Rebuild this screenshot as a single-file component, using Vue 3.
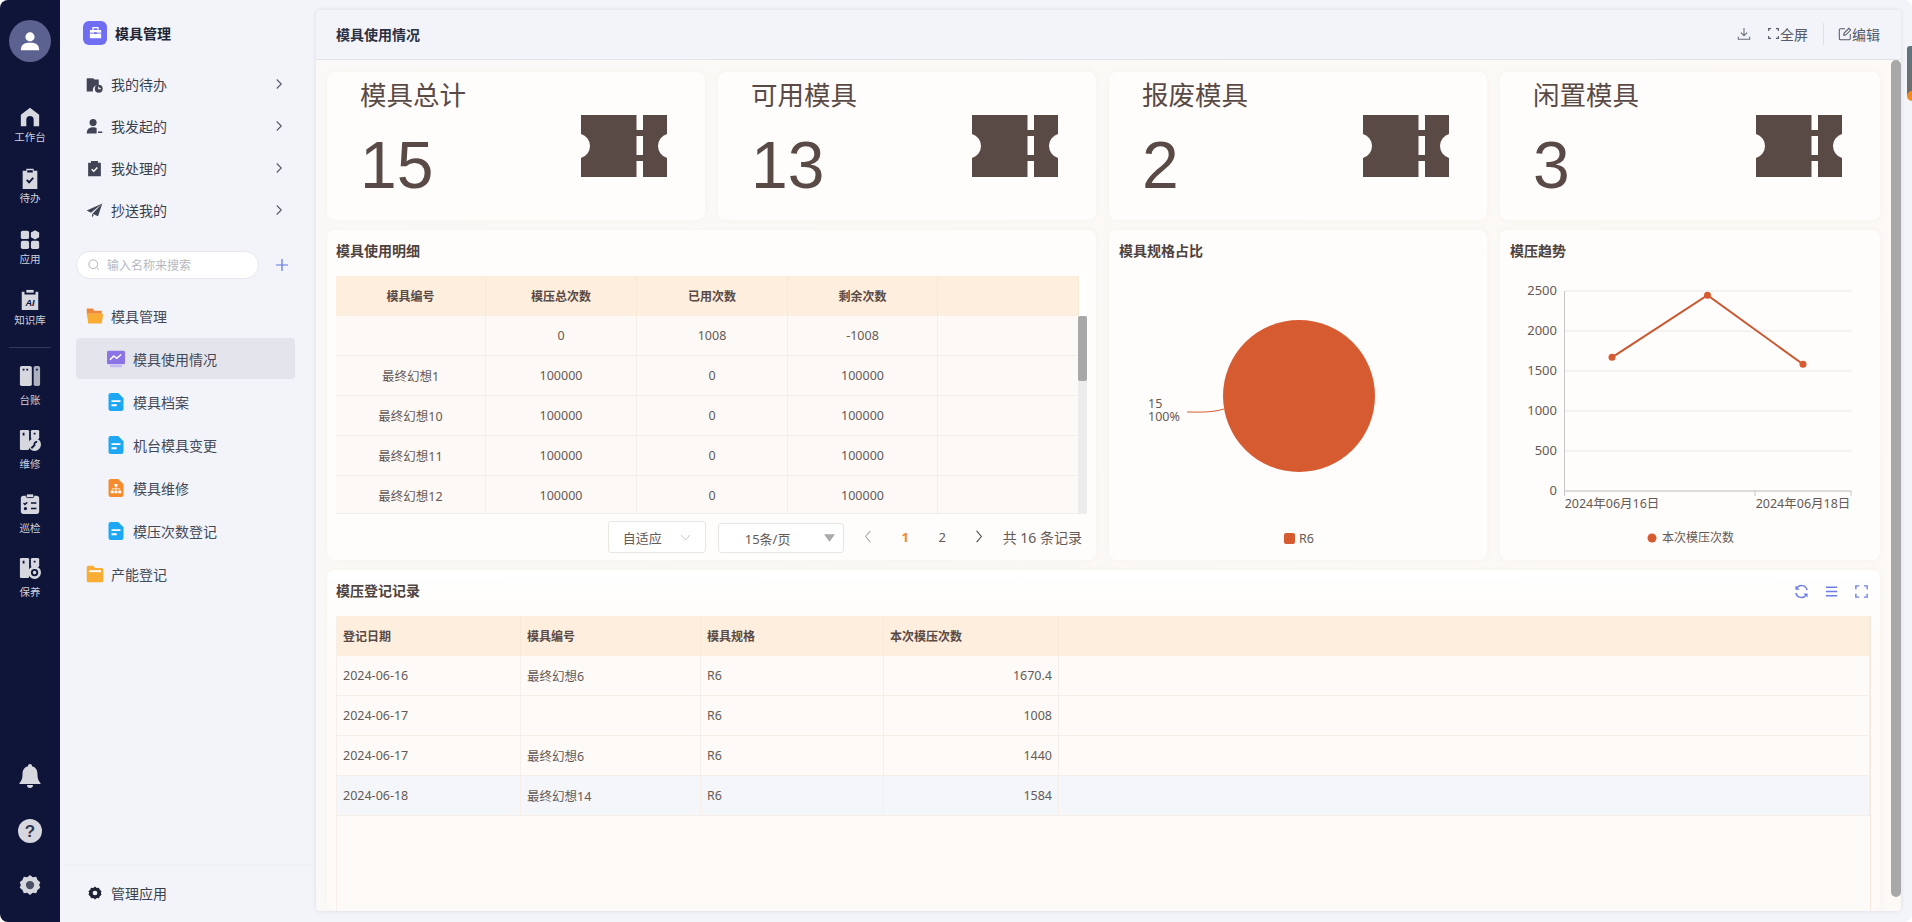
<template>
  <div class="app">
    <!-- dark icon rail -->
    <aside class="rail">
      <div class="avatar">
        <svg viewBox="0 0 24 24" width="22" height="22"><circle cx="12" cy="7.500" r="5" fill="#fff" /><path d="M2 22c0-6 4-8 10-8s10 2 10 8z" fill="#fff" /></svg>
      </div>
      <div class="rail-group first">
        <div class="rail-item">
          <svg viewBox="0 0 24 24" width="22" height="22"><path d="M12 2l10 7.500V22h-6v-7a4 4 0 0 0-8 0v7H2V9.500z" fill="#d6d7df" /></svg>
          <span>工作台</span>
        </div>
        <div class="rail-item">
          <svg viewBox="0 0 24 24" width="22" height="22"><path d="M4 4h4V2h8v2h4v20H4z" fill="#d6d7df" /><path d="M9 3.500h6v2.500H9z" fill="#0e1538" /><path d="M8.500 14l2.500 2.800 4.500-5" fill="none" stroke="#0e1538" stroke-width="2" /></svg>
          <span>待办</span>
        </div>
        <div class="rail-item">
          <svg viewBox="0 0 24 24" width="22" height="22"><rect x="2" y="3" width="9" height="9" rx="2" fill="#d6d7df" /><path d="M17.500 2.500l4.500 2.500v5l-4.500 2.500-4.500-2.500V5z" fill="#d6d7df" /><rect x="2" y="14" width="9" height="9" rx="2" fill="#d6d7df" /><rect x="13" y="14" width="9" height="9" rx="2" fill="#d6d7df" /></svg>
          <span>应用</span>
        </div>
        <div class="rail-item">
          <svg viewBox="0 0 24 24" width="22" height="22"><path d="M3 3h3v3h12V3h3v20H3z" fill="#d6d7df" /><path d="M8 1h8v3H8z" fill="#d6d7df" /><text x="12" y="18" class="ai">AI</text></svg>
          <span>知识库</span>
        </div>
      </div>
      <div class="rail-line"></div>
      <div class="rail-group">
        <div class="rail-item tall">
          <svg viewBox="0 0 24 24" width="22" height="22"><rect x="1" y="1" width="13" height="22" rx="2" fill="#d6d7df" /><rect x="16" y="1" width="7" height="22" rx="2" fill="#aeb0bd" /><path d="M4 4h2v2H4zM8 4h2v2H8zM18.500 4h2v2h-2z" fill="#0e1538" /></svg>
          <span>台账</span>
        </div>
        <div class="rail-item tall">
          <svg viewBox="0 0 24 24" width="22" height="22"><rect x="1" y="1" width="10" height="22" rx="1.500" fill="#d6d7df" /><rect x="13" y="1" width="9" height="10" rx="1.500" fill="#d6d7df" /><circle cx="17" cy="17" r="7" fill="#d6d7df" /><path d="M13.500 21l4-4M19.800 14.200a2.500 2.500 0 0 0-3 3" stroke="#0e1538" stroke-width="2" fill="none" /><path d="M4 4h2v3H4zM16 4h2v2h-2z" fill="#0e1538" /></svg>
          <span>维修</span>
        </div>
        <div class="rail-item tall">
          <svg viewBox="0 0 24 24" width="22" height="22"><rect x="2" y="3" width="20" height="20" rx="3" fill="#d6d7df" /><rect x="8" y="1" width="8" height="4" rx="1" fill="#d6d7df" stroke="#0e1538" /><path d="M5 11l1.500 1.500L9 10M13 11h6M13 17h6" stroke="#0e1538" stroke-width="1.600" fill="none" /><circle cx="7" cy="17" r="1.800" fill="#0e1538" /></svg>
          <span>巡检</span>
        </div>
        <div class="rail-item tall">
          <svg viewBox="0 0 24 24" width="22" height="22"><rect x="1" y="1" width="10" height="22" rx="1.500" fill="#d6d7df" /><rect x="13" y="1" width="9" height="10" rx="1.500" fill="#d6d7df" /><circle cx="17" cy="17" r="7" fill="#d6d7df" /><circle cx="17" cy="17" r="3" fill="none" stroke="#0e1538" stroke-width="2" /><path d="M4 4h2v3H4zM16 4h2v2h-2z" fill="#0e1538" /></svg>
          <span>保养</span>
        </div>
      </div>
      <div class="rail-bottom">
        <svg viewBox="0 0 24 24" width="24" height="24"><path d="M12 0a2 2 0 0 1 2 2.200c4 1 5.500 4 5.500 8.300 0 4 .8 6 3 8.500v1H1.500v-1c2.200-2.500 3-4.500 3-8.500 0-4.300 1.500-7.300 5.500-8.300A2 2 0 0 1 12 0z" fill="#d6d7df" /><path d="M9 21h6a3 3 0 0 1-6 0z" fill="#d6d7df" /></svg>
        <svg viewBox="0 0 24 24" width="24" height="24"><circle cx="12" cy="12" r="12" fill="#d6d7df" /><text x="12" y="18" class="help">?</text></svg>
        <svg viewBox="0 0 24 24" width="22" height="22"><path d="M12 1l3 2.500 3.800-.6 1.400 3.600 3 2.400L22 12l1.200 3.100-3 2.400-1.400 3.600-3.800-.6L12 23l-3-2.500-3.800.6-1.400-3.600-3-2.400L2 12 .8 8.900l3-2.400 1.400-3.600 3.800.6z" fill="#d6d7df" /><circle cx="12" cy="12" r="4.500" fill="#4c5064" /></svg>
      </div>
    </aside>

    <!-- app menu -->
    <nav class="side">
      <div class="side-head">
        <div class="logo">
          <svg viewBox="0 0 24 24" width="15" height="15"><path d="M3 8h18v13H3z" fill="#fff" /><path d="M8 8V4h8v4" fill="none" stroke="#fff" stroke-width="2" /><path d="M3 13h18" stroke="#6f6df2" stroke-width="1.500" /><rect x="10" y="11.500" width="4" height="3" fill="#6f6df2" /></svg>
        </div>
        <span>模具管理</span>
      </div>

      <div class="menu">
        <div class="menu-row">
          <svg viewBox="0 0 24 24" width="17" height="17"><path d="M1 3h9l2 2h6v8a7 7 0 0 0-8 9H1z" fill="#404454" /><circle cx="18" cy="18" r="5.500" fill="#404454" /><path d="M18 15v3h3" stroke="#fff" stroke-width="1.500" fill="none" /></svg>
          <span>我的待办</span>
          <svg class="chev" viewBox="0 0 10 16" width="8" height="12"><path d="M2 2l6 6-6 6" fill="none" stroke="#555a68" stroke-width="1.500" /></svg>
        </div>
        <div class="menu-row">
          <svg viewBox="0 0 24 24" width="17" height="17"><circle cx="10" cy="6.500" r="5" fill="#404454" /><path d="M1 22c0-6 3-9 9-9 2 0 4 .5 5 1.500V22z" fill="#404454" /><path d="M17 20h6" stroke="#404454" stroke-width="2" /></svg>
          <span>我发起的</span>
          <svg class="chev" viewBox="0 0 10 16" width="8" height="12"><path d="M2 2l6 6-6 6" fill="none" stroke="#555a68" stroke-width="1.500" /></svg>
        </div>
        <div class="menu-row">
          <svg viewBox="0 0 24 24" width="17" height="17"><path d="M3 4h4V1.500h10V4h4v19H3z" fill="#404454" /><path d="M8 13l3 3 5-5.500" fill="none" stroke="#fff" stroke-width="2" /></svg>
          <span>我处理的</span>
          <svg class="chev" viewBox="0 0 10 16" width="8" height="12"><path d="M2 2l6 6-6 6" fill="none" stroke="#555a68" stroke-width="1.500" /></svg>
        </div>
        <div class="menu-row">
          <svg viewBox="0 0 24 24" width="17" height="17"><path d="M23 2L1 12l6 3L23 2zM23 2L9 16.500l8 3.500zM8.500 17v5l2.500-3.500z" fill="#404454" /></svg>
          <span>抄送我的</span>
          <svg class="chev" viewBox="0 0 10 16" width="8" height="12"><path d="M2 2l6 6-6 6" fill="none" stroke="#555a68" stroke-width="1.500" /></svg>
        </div>
      </div>

      <div class="search-row">
        <div class="search">
          <svg viewBox="0 0 16 16" width="12" height="12"><circle cx="7" cy="7" r="5.800" fill="none" stroke="#a9acb4" stroke-width="1.200" /><path d="M11.500 11.500l3 3" stroke="#a9acb4" stroke-width="1.200" /></svg>
          <span>输入名称来搜索</span>
        </div>
        <svg class="plus" viewBox="0 0 12 12" width="12" height="12"><path d="M6 0v12M0 6h12" stroke="#5f74e0" stroke-width="1.200" /></svg>
      </div>

      <div class="tree">
        <div class="tree-row">
          <svg viewBox="0 0 24 24" width="18" height="18"><path d="M1 2h8l2 3h10v4H1z" fill="#f0883a" /><path d="M1 9h22l-2 13H3z" fill="#f9ad35" /></svg>
          <span>模具管理</span>
        </div>
        <div
          v-for="leaf in leaves"
          :key="leaf.name"
          class="tree-row leaf"
          :class="{ active: leaf.type === 'chart' }"
        >
          <svg v-if="leaf.type === 'chart'" viewBox="0 0 24 24" width="18" height="18"><rect x="0" y="1" width="24" height="18" rx="2" fill="#8a74e6" /><rect x="4" y="20" width="16" height="3" rx="1" fill="#c5b9f2" /><path d="M4 13l5-5 4 3 6-5" fill="none" stroke="#fff" stroke-width="2" /></svg>
          <svg v-else-if="leaf.type === 'tree'" viewBox="0 0 24 24" width="18" height="18"><path d="M2 3a3 3 0 0 1 3-3h10l7 7v14a3 3 0 0 1-3 3H5a3 3 0 0 1-3-3z" fill="#f58b2c" /><path d="M10 6.500h4v3.500h-4zM5 15.500h4V19H5zM10 15.500h4V19h-4zM15 15.500h4V19h-4z" fill="#fff" /><path d="M7 15.500V13h10v2.500M12 10v5.500" fill="none" stroke="#fff" /></svg>
          <svg v-else viewBox="0 0 24 24" width="18" height="18"><path d="M2 3a3 3 0 0 1 3-3h10l7 7v14a3 3 0 0 1-3 3H5a3 3 0 0 1-3-3z" fill="#1ea7f2" /><path d="M6 9.500h12v2.500H6zM6 15h7v2.500H6z" fill="#fff" /></svg>
          <span>{{ leaf.name }}</span>
        </div>
        <div class="tree-row">
          <svg viewBox="0 0 24 24" width="18" height="18"><path d="M1 3a2 2 0 0 1 2-2h7l2 3h9a2 2 0 0 1 2 2v15a2 2 0 0 1-2 2H3a2 2 0 0 1-2-2z" fill="#f9ad35" /><path d="M4 7h16v2.500H4z" fill="#fff" /></svg>
          <span>产能登记</span>
        </div>
      </div>

      <div class="side-foot">
        <svg viewBox="0 0 24 24" width="14" height="14"><path d="M12 1l3 2.500 3.800-.6 1.400 3.600 3 2.400L22 12l1.200 3.100-3 2.400-1.400 3.600-3.800-.6L12 23l-3-2.500-3.800.6-1.400-3.600-3-2.400L2 12 .8 8.900l3-2.400 1.400-3.600 3.800.6z" fill="#1f2333" /><circle cx="12" cy="12" r="4" fill="#f2f4fa" /></svg>
        <span>管理应用</span>
      </div>
    </nav>

    <!-- dashboard panel -->
    <main class="panel">
      <header class="panel-head">
        <h1>模具使用情况</h1>
        <div class="head-tools">
          <svg viewBox="0 0 16 16" width="14" height="14"><path d="M8 1v9M4.500 6.500L8 10l3.500-3.500M1.500 11v3h13v-3" fill="none" stroke="#666b78" stroke-width="1.200" /></svg>
          <div class="tool fs">
            <svg viewBox="0 0 16 16" width="13" height="13"><path d="M5 2H2v3M11 2h3v3M5 14H2v-3M11 14h3v-3" fill="none" stroke="#555a68" stroke-width="1.400" /></svg>
            <span>全屏</span>
          </div>
          <i class="sep"></i>
          <div class="tool">
            <svg viewBox="0 0 16 16" width="14" height="14"><path d="M8 2H3a1.500 1.500 0 0 0-1.500 1.500v9.500A1.500 1.500 0 0 0 3 14.500h9.500A1.500 1.500 0 0 0 14 13V8" fill="none" stroke="#555a68" stroke-width="1.200" /><path d="M6.500 9.500l.5-2.500 5.500-5.500 2 2L9 9z" fill="none" stroke="#555a68" stroke-width="1.200" /></svg>
            <span>编辑</span>
          </div>
        </div>
      </header>

      <div class="panel-body">
        <div class="dash">
          <section v-for="s in stats" :key="s.title" class="card stat">
            <div class="stat-text">
              <p class="stat-title">{{ s.title }}</p>
              <p class="stat-num">{{ s.value }}</p>
            </div>
            <svg viewBox="0 0 86 62" width="86" height="62"><path fill-rule="evenodd" d="M0 0h55.500v15h6.500V0h24v19a12.500 12.500 0 0 0 0 24v19H62V46h-6.500v16H0V43a12.500 12.500 0 0 0 0-24zM55.500 21v19h6.500V21z" fill="#5a4a46" /></svg>
          </section>

          <section class="card detail">
            <h2>模具使用明细</h2>
            <div class="detail-wrap">
              <table class="grid-table center">
                <colgroup>
                  <col style="width: 150px" />
                  <col style="width: 151px" />
                  <col style="width: 151px" />
                  <col style="width: 150px" />
                  <col />
                </colgroup>
                <thead>
                  <tr><th>模具编号</th><th>模压总次数</th><th>已用次数</th><th>剩余次数</th><th></th></tr>
                </thead>
                <tbody>
                  <tr v-for="(row, i) in details" :key="i">
                    <td>{{ row[0] }}</td><td>{{ row[1] }}</td><td>{{ row[2] }}</td><td>{{ row[3] }}</td><td></td>
                  </tr>
                </tbody>
              </table>
              <div class="tbl-track"></div>
              <div class="tbl-thumb"></div>
            </div>
            <div class="pager">
              <div class="sel auto">
                <span>自适应</span>
                <svg viewBox="0 0 12 8" width="11" height="7"><path d="M1 1l5 6 5-6" fill="none" stroke="#c4c4c4" /></svg>
              </div>
              <div class="sel size">
                <span>15条/页</span>
                <svg viewBox="0 0 12 8" width="11" height="8"><path d="M0 0h12L6 8z" fill="#aaa" /></svg>
              </div>
              <div class="pg">
                <svg viewBox="0 0 10 16" width="8" height="13"><path d="M8 1L2 8l6 7" fill="none" stroke="#aaa" stroke-width="1.300" /></svg>
              </div>
              <div class="pg on">1</div>
              <div class="pg">2</div>
              <div class="pg">
                <svg viewBox="0 0 10 16" width="8" height="13"><path d="M2 1l6 7-6 7" fill="none" stroke="#444" stroke-width="1.300" /></svg>
              </div>
              <span class="total">共 16 条记录</span>
            </div>
          </section>

          <section class="card chart">
            <h2>模具规格占比</h2>
            <svg class="plot" viewBox="0 0 379 288" width="379" height="288">
              <circle cx="190" cy="124" r="76" fill="#d75b31" />
              <path d="M78 140c10 0 24 1 37-3" fill="none" stroke="#d75b31" />
              <text x="39" y="136" class="tick">15</text>
              <text x="39" y="149" class="tick">100%</text>
              <rect x="175" y="261" width="11" height="11" rx="2" fill="#d75b31" />
              <text x="190" y="271" class="tick">R6</text>
            </svg>
          </section>

          <section class="card chart">
            <h2>模压趋势</h2>
            <svg class="plot" viewBox="0 0 380 288" width="380" height="288">
              <g v-for="t in yTicks" :key="t.label">
                <line x1="65" x2="351" :y1="t.y" :y2="t.y" stroke="#ebe6e6" />
                <text x="57" :y="t.y + 4" class="tick y" text-anchor="end">{{ t.label }}</text>
              </g>
              <path d="M64.500 19v205M64.500 219H351M255 219v5M351 219v5" fill="none" stroke="#c8c5c4" />
              <polyline :points="linePoints" fill="none" stroke="#c9572f" stroke-width="2" />
              <circle v-for="p in points" :key="p.x" :cx="p.x" :cy="p.y" r="3.500" fill="#d75b31" />
              <text x="112" y="236" class="tick" text-anchor="middle">2024年06月16日</text>
              <text x="303" y="236" class="tick" text-anchor="middle">2024年06月18日</text>
              <circle cx="152" cy="266" r="4.500" fill="#d75b31" />
              <text x="162" y="270" class="tick legend">本次模压次数</text>
            </svg>
          </section>

          <section class="card records">
            <div class="rec-head">
              <h2>模压登记记录</h2>
              <div class="rec-tools">
                <svg viewBox="0 0 16 16" width="15" height="15"><path d="M14 6.500A6 6 0 0 0 3 4.500M2 9.500a6 6 0 0 0 11 2" fill="none" stroke="#6d7ee8" stroke-width="1.600" /><path d="M1.500 1.500v4.500H6zM14.500 14.500V10H10z" fill="#6d7ee8" /></svg>
                <svg viewBox="0 0 16 16" width="15" height="15"><path d="M2 3.500h12M2 8h12M2 12.500h12" stroke="#6d7ee8" stroke-width="1.500" /></svg>
                <svg viewBox="0 0 16 16" width="15" height="15"><path d="M5.500 2H2v3.500M10.500 2H14v3.500M5.500 14H2v-3.500M10.500 14H14v-3.500" fill="none" stroke="#6d7ee8" stroke-width="1.500" /></svg>
              </div>
            </div>
            <div class="rec-wrap">
              <table class="grid-table">
                <colgroup>
                  <col style="width: 184px" />
                  <col style="width: 180px" />
                  <col style="width: 183px" />
                  <col style="width: 175px" />
                  <col />
                </colgroup>
                <thead>
                  <tr><th>登记日期</th><th>模具编号</th><th>模具规格</th><th>本次模压次数</th><th></th></tr>
                </thead>
                <tbody>
                  <tr v-for="(row, i) in records" :key="i" :class="{ hover: i === 3 }">
                    <td>{{ row.date }}</td>
                    <td>{{ row.code }}</td>
                    <td>R6</td>
                    <td class="num">{{ row.count }}</td>
                    <td></td>
                  </tr>
                </tbody>
              </table>
            </div>
          </section>
        </div>
        <div class="panel-thumb"></div>
      </div>
    </main>

    <div class="edge-tab"></div>
  </div>
</template>

<script setup>
const leaves = [
  { name: "模具使用情况", type: "chart" },
  { name: "模具档案", type: "file" },
  { name: "机台模具变更", type: "file" },
  { name: "模具维修", type: "tree" },
  { name: "模压次数登记", type: "file" }
];

const stats = [
  { title: "模具总计", value: 15 },
  { title: "可用模具", value: 13 },
  { title: "报废模具", value: 2 },
  { title: "闲置模具", value: 3 }
];

const details = [
  ["", 0, 1008, -1008],
  ["最终幻想1", 100000, 0, 100000],
  ["最终幻想10", 100000, 0, 100000],
  ["最终幻想11", 100000, 0, 100000],
  ["最终幻想12", 100000, 0, 100000]
];

const records = [
  { date: "2024-06-16", code: "最终幻想6", count: "1670.4" },
  { date: "2024-06-17", code: "", count: "1008" },
  { date: "2024-06-17", code: "最终幻想6", count: "1440" },
  { date: "2024-06-18", code: "最终幻想14", count: "1584" }
];

// chart scale: 0 sits at y=219, 2500 at y=19
const yOf = (v) => 219 - v * 0.08;
const yTicks = [2500, 2000, 1500, 1000, 500, 0].map((v) => ({ label: v, y: yOf(v) }));
const points = [
  { x: 112, y: yOf(1670.4) },
  { x: 207.5, y: yOf(2448) },
  { x: 303, y: yOf(1584) }
];
const linePoints = points.map((p) => `${p.x},${p.y}`).join(" ");
</script>

<style>
html,
body {
  margin: 0;
  background: #fff;
}
</style>

<style scoped>
.app {
  position: relative;
  display: flex;
  width: 1912px;
  height: 922px;
  overflow: hidden;
  border-radius: 8px;
  background: #f2f4fa;
  font-family: "Noto Sans", "Noto Sans CJK SC", sans-serif;
  color: #3a3f4e;
}

h1,
h2,
p {
  margin: 0;
}

/* Rail */
.rail {
  flex: none;
  width: 60px;
  height: 922px;
  display: flex;
  flex-direction: column;
  align-items: center;
  box-sizing: border-box;
  padding: 20px 0 26px;
  background: #0e1538;
}

.avatar {
  width: 42px;
  height: 42px;
  border-radius: 50%;
  background: #5c628f;
  display: flex;
  align-items: center;
  justify-content: center;
}

.rail-group {
  width: 100%;
}

.rail-group.first {
  margin-top: 32px;
}

.rail-item {
  height: 61px;
  display: flex;
  flex-direction: column;
  align-items: center;
  justify-content: center;
  gap: 2px;
  font-size: 10.5px;
  line-height: 14px;
  color: #cfd1dc;
}

.rail-item.tall {
  height: 64px;
  gap: 6px;
}

.rail-line {
  flex: none;
  width: 42px;
  height: 1px;
  margin: 9px 0 6px;
  background: #33395a;
}

.rail-bottom {
  margin-top: auto;
  display: flex;
  flex-direction: column;
  align-items: center;
  gap: 31px;
}

.ai {
  font: italic bold 10px "Liberation Sans", sans-serif;
  fill: #0e1538;
  text-anchor: middle;
}

.help {
  font: bold 17px "Liberation Sans", sans-serif;
  fill: #33374d;
  text-anchor: middle;
}

/* Side menu */
.side {
  flex: none;
  width: 256px;
  height: 922px;
  display: flex;
  flex-direction: column;
  box-sizing: border-box;
  padding-left: 16px;
}

.side-head {
  height: 61px;
  padding: 2px 0 0 7px;
  display: flex;
  align-items: center;
  gap: 8px;
  font-size: 14px;
  font-weight: 700;
  color: #1f2333;
}

.logo {
  width: 24px;
  height: 24px;
  border-radius: 6px;
  background: #6f6df2;
  display: flex;
  align-items: center;
  justify-content: center;
}

.menu-row {
  height: 42px;
  width: 200px;
  padding-left: 10px;
  display: flex;
  align-items: center;
  gap: 8px;
  font-size: 14px;
}

.chev {
  margin-left: auto;
  margin-right: 3px;
}

.search-row {
  margin-top: 20px;
  display: flex;
  align-items: center;
}

.search {
  width: 183px;
  height: 28px;
  box-sizing: border-box;
  padding-left: 11px;
  border: 1px solid #e6e7ec;
  border-radius: 14px;
  background: #fff;
  display: flex;
  align-items: center;
  gap: 7px;
  font-size: 12px;
  color: #b7b9c0;
}

.plus {
  margin-left: 17px;
}

.tree {
  margin-top: 16px;
  width: 219px;
  display: flex;
  flex-direction: column;
  gap: 2px;
}

.tree-row {
  height: 41px;
  padding-left: 10px;
  display: flex;
  align-items: center;
  gap: 7px;
  font-size: 14px;
  color: #444857;
  border-radius: 4px;
}

.tree-row.leaf {
  padding-left: 31px;
  gap: 8px;
}

.tree-row.active {
  background: #e4e5ec;
}

.side-foot {
  margin: auto 0 0 -12px;
  height: 54px;
  padding: 0 0 2px 24px;
  width: 224px;
  border-top: 2px solid #eef0f5;
  display: flex;
  align-items: center;
  gap: 9px;
  font-size: 14px;
}

/* Panel */
.panel {
  flex: none;
  width: 1585px;
  height: 901px;
  margin-top: 10px;
  border-radius: 4px;
  overflow: hidden;
  background: #f2f4fa;
  box-shadow: 0 0 4px rgba(0, 0, 0, 0.1);
}

.panel-head {
  height: 50px;
  box-sizing: border-box;
  padding: 0 21px 2px 20px;
  display: flex;
  align-items: center;
  justify-content: space-between;
  border-bottom: 1px solid #e3e4e9;
}

.panel-head h1 {
  font-size: 14px;
  font-weight: 700;
  color: #2b3042;
}

.head-tools {
  display: flex;
  align-items: center;
  font-size: 14px;
  color: #555a68;
}

.tool {
  display: flex;
  align-items: center;
}

.tool.fs {
  margin-left: 16px;
}

.sep {
  width: 1px;
  height: 22px;
  margin: 0 14px 0 15px;
  background: #dfe0e5;
}

.panel-body {
  position: relative;
  height: 851px;
  overflow: hidden;
  background: linear-gradient(100deg, #fbf9f7, #fcf9f6);
}

.dash {
  display: grid;
  grid-template-columns: repeat(3, 378px) 380px;
  grid-template-rows: 148px 330px 341px;
  gap: 10px 13px;
  padding: 12px 0 0 11px;
}

.card {
  border-radius: 8px;
  background: #fffdfc;
  box-shadow: 0 0 6px rgba(240, 230, 222, 0.35);
}

.card h2 {
  font-size: 14px;
  font-weight: 700;
  line-height: 42px;
  color: #4f4340;
}

/* Stat cards */
.stat {
  display: flex;
  align-items: center;
  justify-content: space-between;
  padding: 0 38px 0 33px;
}

.stat-text {
  align-self: flex-start;
  color: #5a4a46;
}

.stat-title {
  margin-top: 6px;
  font-size: 26.5px;
  line-height: 34px;
}

.stat-num {
  margin: 23px 0 0 0;
  font-family: "Liberation Sans", Arial, sans-serif;
  font-size: 66px;
  line-height: 60px;
}

/* Detail table */
.detail {
  grid-column: span 2;
  padding: 0 9px;
}

.detail-wrap {
  position: relative;
  height: 237px;
  margin-top: 4px;
  overflow: hidden;
  border-bottom: 1px solid #f3ede8;
  background: #fff;
}

.detail-wrap .grid-table {
  width: 743px;
}

.tbl-track {
  position: absolute;
  top: 40px;
  right: 0;
  bottom: 0;
  width: 9px;
  background: #ececec;
}

.tbl-thumb {
  position: absolute;
  top: 40px;
  right: 0;
  width: 9px;
  height: 65px;
  border-radius: 2px;
  background: #a8a8a8;
}

.grid-table {
  width: 100%;
  table-layout: fixed;
  border-collapse: separate;
  border-spacing: 0;
  font-size: 12.5px;
  color: #655a56;
  background: #fdf9f6;
}

.grid-table th {
  height: 40px;
  box-sizing: border-box;
  padding: 0 6px 1px;
  text-align: left;
  font-size: 12px;
  font-weight: 700;
  color: #5a4a46;
  background: #feeedd;
  border-right: 1px solid #f8e8d8;
}

.grid-table td {
  height: 40px;
  box-sizing: border-box;
  padding: 0 6px 1px;
  border-right: 1px solid #f6efe9;
  border-bottom: 1px solid #f4eee9;
}

.grid-table.center th,
.grid-table.center td {
  text-align: center;
}

.grid-table td.num {
  text-align: right;
}

.grid-table tr.hover td {
  background: #f4f6f9;
}

.pager {
  display: flex;
  align-items: center;
  justify-content: flex-end;
  height: 32px;
  margin-top: 7px;
  padding-right: 5px;
  font-size: 13px;
  color: #655a56;
}

.sel {
  box-sizing: border-box;
  display: flex;
  align-items: center;
  justify-content: space-between;
  border: 1px solid #e8e5e3;
  border-radius: 3px;
  background: #fff;
}

.sel.auto {
  width: 98px;
  height: 32px;
  padding: 0 14px;
  margin-right: 12px;
}

.sel.size {
  width: 126px;
  height: 30px;
  padding: 0 8px 0 26px;
  margin: 2px 6px 0 0;
}

.pg {
  width: 37px;
  text-align: center;
  line-height: 1;
}

.pg.on {
  color: #f28a2e;
  font-weight: 700;
}

.total {
  margin-left: 5px;
  font-size: 14px;
}

/* Charts */
.chart {
  overflow: hidden;
}

.chart h2 {
  padding-left: 10px;
}

.plot {
  display: block;
}

.tick {
  font-size: 12.5px;
  font-family: "Noto Sans", "Noto Sans CJK SC", sans-serif;
  fill: #655a56;
}

.tick.y {
  font-size: 13px;
}

.tick.legend {
  font-size: 12px;
}

/* Records */
.records {
  grid-column: span 4;
  padding: 0 9px;
  background: linear-gradient(#ffffff, #fefaf7 30%);
}

.rec-head {
  display: flex;
  justify-content: space-between;
}

.rec-tools {
  display: flex;
  align-items: center;
  gap: 15px;
  padding-right: 2px;
  height: 42px;
}

.rec-wrap {
  height: 295px;
  margin-top: 4px;
  border-left: 1px solid #f6efe9;
  border-right: 1px solid #f6e9df;
  background: #fefaf7;
}

.rec-wrap .grid-table {
  background: #fefaf7;
}

.panel-thumb {
  position: absolute;
  top: 0;
  right: 0;
  width: 10px;
  height: 837px;
  border-radius: 5px;
  background: #a8a8a8;
}

.edge-tab {
  position: absolute;
  top: 46px;
  right: 0;
  width: 5px;
  height: 50px;
  border-radius: 3px 0 0 0;
  background: linear-gradient(#5f7480, #6f6f68);
}

.edge-tab::after {
  content: "";
  position: absolute;
  left: 0;
  bottom: -5px;
  width: 10px;
  height: 10px;
  border-radius: 50%;
  background: #f08a24;
}
</style>
